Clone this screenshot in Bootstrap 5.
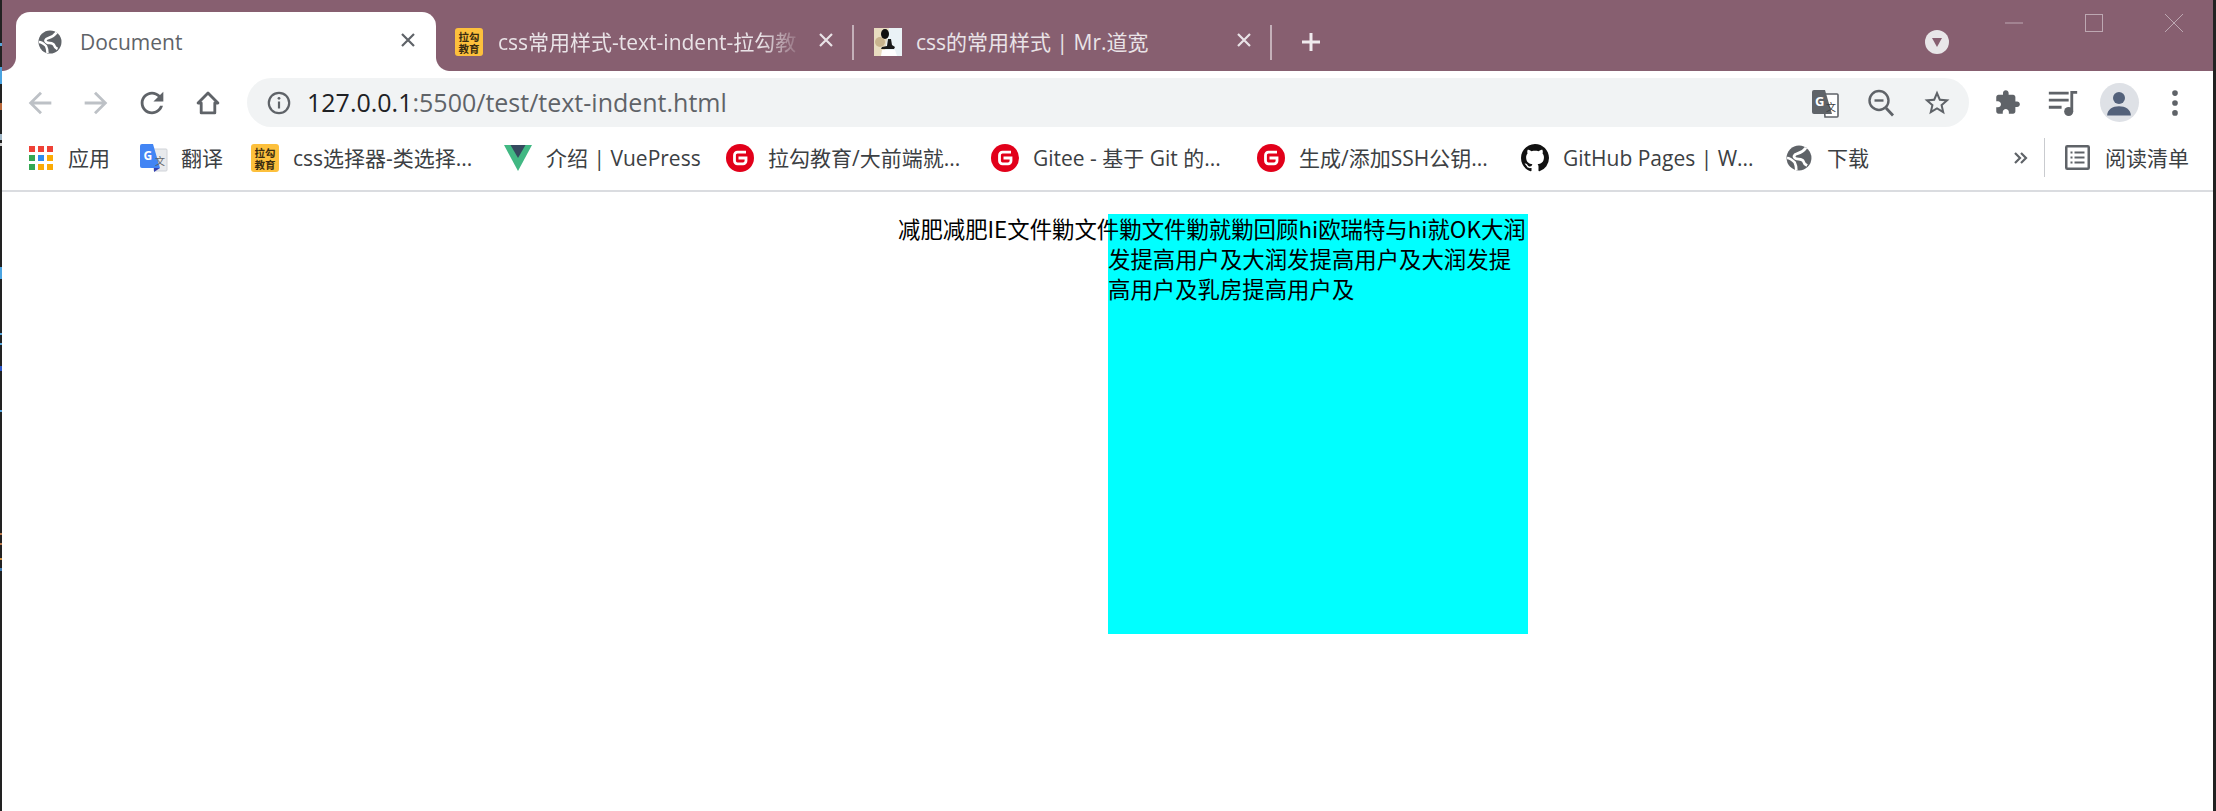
<!DOCTYPE html>
<html lang="zh-CN">
<head>
<meta charset="UTF-8" />
<meta name="viewport" content="width=device-width, initial-scale=1" />
<title>Document</title>
<link href="https://cdn.jsdelivr.net/npm/bootstrap@5.3.0/dist/css/bootstrap.min.css" rel="stylesheet" />
<style>
	html, body { height: 100%; }
	body {
		background: #222;
		padding: 0 3px 0 2px;
		font-family: "Open Sans", "Noto Sans CJK SC", sans-serif;
		font-size: 21px;
		overflow: hidden;
	}
	.browser-win { background: #fff; height: 100%; }
	.edge-bits { position: absolute; left: 0; top: 0; }

	/* tab strip */
	.tab-strip { height: 71px; background: #875f70; }
	.tab-item { width: 416px; height: 59px; margin-top: 12px; padding-left: 19px; color: #e9e3e7; }
	.tab-item.tab-on {
		width: 420px;
		margin-left: 14px;
		padding-left: 22px;
		background: #fff;
		color: #5f6368;
		border-radius: 14px 14px 0 0;
		position: relative;
	}
	.tab-item.tab-pic { padding-left: 20px; }
	.tab-on::before, .tab-on::after { content: ""; position: absolute; bottom: 0; width: 14px; height: 14px; }
	.tab-on::before { left: -14px; background: radial-gradient(circle at 0 0, transparent 13.5px, #fff 14.5px); }
	.tab-on::after { right: -14px; background: radial-gradient(circle at 100% 0, transparent 13.5px, #fff 14.5px); }
	.tab-ico { width: 28px; height: 28px; flex: none; }
	.tab-on .tab-ico { width: 24px; height: 24px; }
	.tab-title { margin-left: 15px; white-space: nowrap; width: 306px; line-height: 28px; }
	.tab-pic .tab-title { margin-left: 14px; }
	.tab-on .tab-title { margin-left: 18px; width: 300px; }
	.tab-fade { -webkit-mask-image: linear-gradient(to right, #000 86%, transparent 100%); mask-image: linear-gradient(to right, #000 86%, transparent 100%); }
	.tab-x { width: 14px; height: 14px; margin-left: auto; margin-right: 19px; flex: none; margin-bottom: 4px; }
	.tab-on .tab-x { margin-right: 21px; }
	.tab-line { width: 2px; height: 35px; margin-top: 25px; background: #c4b0b9; flex: none; }
	.tab-add { width: 22px; height: 22px; margin: 31px 0 0 28px; flex: none; }
	.tab-search { width: 24px; height: 24px; margin: 30px 56px 0 auto; border-radius: 50%; background: #e8e6e8; flex: none; }
	.win-btn { width: 18px; height: 18px; margin-top: 14px; flex: none; }
	.win-gap { margin-left: 62px; }
	.win-end { margin-right: 30px; }

	/* toolbar */
	.tool-row { height: 56px; padding: 7px 10px 0 10px; background: #fff; }
	.tool-btn { width: 56px; height: 49px; flex: none; }
	.tool-btn svg { width: 34px; height: 34px; }
	.tool-btn svg.puzzle-ico { width: 27px; height: 27px; }
	.omni-box { height: 49px; margin-left: 11px; margin-right: 10px; border-radius: 25px; background: #f1f3f4; padding: 0 4px 0 20px; }
	.omni-info { width: 24px; height: 24px; flex: none; }
	.omni-url { margin-left: 16px; font-size: 25px; color: #5f6368; white-space: nowrap; }
	.omni-url b { font-weight: 400; color: #202124; }
	.omni-btn { width: 56px; height: 49px; flex: none; }
	.omni-btn svg { width: 30px; height: 30px; }
	.avatar-dot { width: 39px; height: 39px; border-radius: 50%; background: #dee1e6; }
	.avatar-dot svg { width: 30px; height: 30px; }

	/* bookmarks */
	.bm-row { height: 65px; padding: 0 0 2px 28px; border-bottom: 2px solid #dadce0; background: #fff; color: #3c4043; }
	.bm-item { flex: none; white-space: nowrap; }
	.bm-item span { padding-top: 2px; }
	.bm-item svg { width: 28px; height: 28px; flex: none; margin-right: 14px; }
	.bm-item svg.apps-ico { width: 24px; height: 24px; margin-left: -1px; margin-right: 15px; }
	.bm-item svg.small-globe { width: 26px; height: 26px; margin-right: 15px; }
	.bm-item svg.read-ico { width: 25px; height: 25px; margin-right: 15px; }
	.w-apps { width: 110px; }
	.w-fy { width: 111px; }
	.w-fy svg { margin-right: 13px; }
	.w-css { width: 253px; }
	.w-vue { width: 222px; }
	.w-gou { width: 265px; }
	.w-git { width: 266px; }
	.w-ssh { width: 264px; }
	.w-gh { width: 265px; }
	.bm-more { margin-left: auto; width: 16px; height: 16px; flex: none; }
	.bm-sep { width: 1px; height: 39px; margin: 0 20px 0 16px; background: #c9cbcf; flex: none; }
	.bm-read { margin-right: 24px; }

	/* page */
	.page-box {
		width: 420px;
		height: 420px;
		margin: 22px 0 0 1106px;
		background: #0ff;
		color: #000;
		font-family: "Noto Sans CJK SC", sans-serif;
		font-size: 22.4px;
		line-height: 29.8px;
		text-indent: -210px;
	}
</style>
</head>
<body>
	<svg width="0" height="0" class="position-absolute">
		<symbol id="i-globe" viewBox="0 0 24 24">
			<circle cx="12" cy="12" r="11.500" fill="#5f6368" />
			<path d="M18.500 2.500C16 6 14 7 10.500 8 7 9 6.500 11 9 12.500c2 1 6 0 7 2.500.5 2 1.500 3 3.500 4" fill="none" stroke="#fff" stroke-width="2.600" />
			<path d="M1 12c3 0 5 2 7 4 1 2 1.500 4 1.500 7" fill="none" stroke="#fff" stroke-width="2.400" />
		</symbol>
		<symbol id="i-redg" viewBox="0 0 28 28">
			<circle cx="14" cy="14" r="14" fill="#e2001a" />
			<path d="M20 8.200H11.500a3 3 0 0 0-3 3v5.600a3 3 0 0 0 3 3h5.500a3 3 0 0 0 3-3V14h-7.500" fill="none" stroke="#fff" stroke-width="2.800" />
		</symbol>
		<symbol id="i-x" viewBox="0 0 14 14">
			<path d="M1 1l12 12M13 1L1 13" fill="none" stroke="currentColor" stroke-width="2.200" />
		</symbol>
	</svg>

	<svg class="edge-bits" width="2" height="600" viewBox="0 0 2 600">
		<rect y="43" width="2" height="3" fill="#58a6dc" />
		<rect y="67" width="2" height="17" fill="#4aa3e0" />
		<rect y="103" width="2" height="7" fill="#b8683a" />
		<rect y="134" width="2" height="6" fill="#9fb6c6" />
		<rect y="143" width="2" height="3" fill="#d0d0d0" />
		<rect y="267" width="2" height="12" fill="#4aa3e0" />
		<rect y="333" width="2" height="2" fill="#58a6dc" />
		<rect y="343" width="2" height="2" fill="#58a6dc" />
		<rect y="366" width="2" height="5" fill="#2a55c8" />
		<rect y="410" width="2" height="2" fill="#58a6dc" />
		<rect y="533" width="2" height="2" fill="#b8784a" />
		<rect y="543" width="2" height="2" fill="#b8784a" />
		<rect y="558" width="2" height="2" fill="#d09040" />
		<rect y="568" width="2" height="3" fill="#3a78b0" />
	</svg>

	<div class="browser-win d-flex flex-column">
		<!-- tabs -->
		<div class="tab-strip d-flex align-items-start">
			<div class="tab-item tab-on d-flex align-items-center">
				<svg class="tab-ico"><use href="#i-globe" /></svg>
				<span class="tab-title">Document</span>
				<svg class="tab-x"><use href="#i-x" /></svg>
			</div>
			<div class="tab-item d-flex align-items-center">
				<svg class="tab-ico" viewBox="0 0 28 28">
					<rect width="28" height="28" rx="3" fill="#fdc03c" />
					<text x="14" y="12.500" text-anchor="middle" font-size="10.500" font-weight="700" fill="#3a2c10" font-family="Noto Sans CJK SC">拉勾</text>
					<text x="14" y="24.500" text-anchor="middle" font-size="10.500" font-weight="700" fill="#3a2c10" font-family="Noto Sans CJK SC">教育</text>
				</svg>
				<span class="tab-title tab-fade">css常用样式-text-indent-拉勾教</span>
				<svg class="tab-x"><use href="#i-x" /></svg>
			</div>
			<span class="tab-line"></span>
			<div class="tab-item tab-pic d-flex align-items-center">
				<svg class="tab-ico" viewBox="0 0 28 28">
					<rect width="28" height="28" fill="#e8dcc0" />
					<path d="M15 0h13v28H10z" fill="#eaf2f6" />
					<circle cx="6" cy="14" r="5" fill="#c9b48e" />
					<ellipse cx="11" cy="6" rx="4" ry="5" fill="#111" />
					<path d="M14 11h3l1 6 3 2-1 2H7l1-2 5-1z" fill="#1a1a1a" />
					<path d="M8 22h13l2 6H7z" fill="#fff" />
				</svg>
				<span class="tab-title">css的常用样式 | Mr.道宽</span>
				<svg class="tab-x"><use href="#i-x" /></svg>
			</div>
			<span class="tab-line"></span>
			<svg class="tab-add" viewBox="0 0 22 22"><path d="M11 2v18M2 11h18" stroke="#efeaed" stroke-width="3" /></svg>
			<div class="tab-search d-flex align-items-center justify-content-center">
				<svg width="12" height="12" viewBox="0 0 12 12"><path d="M1 2h10L6 11z" fill="#875f70" /></svg>
			</div>
			<svg class="win-btn" viewBox="0 0 18 18"><path d="M0 9h18" stroke="#bda8b2" stroke-width="1" /></svg>
			<svg class="win-btn win-gap" viewBox="0 0 18 18"><rect x=".5" y=".5" width="17" height="17" fill="none" stroke="#bda8b2" /></svg>
			<svg class="win-btn win-gap win-end" viewBox="0 0 18 18"><path d="M0 0l18 18M18 0L0 18" stroke="#bda8b2" /></svg>
		</div>

		<!-- toolbar -->
		<div class="tool-row d-flex">
			<div class="tool-btn d-flex align-items-center justify-content-center">
				<svg viewBox="0 0 24 24"><path d="M20 11H7.830l5.590-5.590L12 4l-8 8 8 8 1.410-1.410L7.830 13H20v-2z" fill="#bdc1c6" /></svg>
			</div>
			<div class="tool-btn d-flex align-items-center justify-content-center">
				<svg viewBox="0 0 24 24"><path d="M4 11h12.170l-5.590-5.590L12 4l8 8-8 8-1.410-1.410L16.170 13H4v-2z" fill="#bdc1c6" /></svg>
			</div>
			<div class="tool-btn d-flex align-items-center justify-content-center">
				<svg viewBox="0 0 24 24"><path d="M17.650 6.350C16.200 4.900 14.210 4 12 4c-4.420 0-7.990 3.580-7.990 8s3.570 8 7.990 8c3.730 0 6.840-2.550 7.730-6h-2.080c-.82 2.330-3.040 4-5.650 4-3.310 0-6-2.690-6-6s2.690-6 6-6c1.660 0 3.140.69 4.220 1.780L13 11h7V4l-2.350 2.350z" fill="#5f6368" /></svg>
			</div>
			<div class="tool-btn d-flex align-items-center justify-content-center">
				<svg viewBox="0 0 24 24"><path d="M12 5 5 12h2.200v7h9.600v-7H19z" fill="none" stroke="#5f6368" stroke-width="2" stroke-linejoin="round" /></svg>
			</div>
			<div class="omni-box flex-grow-1 d-flex align-items-center">
				<svg class="omni-info" viewBox="0 0 24 24">
					<circle cx="12" cy="12" r="10.200" fill="none" stroke="#5f6368" stroke-width="2.200" />
					<path d="M12 10.500v7" stroke="#5f6368" stroke-width="2.200" />
					<circle cx="12" cy="7.300" r="1.400" fill="#5f6368" />
				</svg>
				<span class="omni-url"><b>127.0.0.1</b>:5500/test/text-indent.html</span>
				<div class="omni-btn ms-auto d-flex align-items-center justify-content-center">
					<svg viewBox="0 0 30 30">
						<path d="M13 6h14a1 1 0 0 1 1 1v21a1 1 0 0 1-1 1H15z" fill="#fff" stroke="#5f6368" stroke-width="1.600" />
						<path d="M4 2h11l7 24H4a2 2 0 0 1-2-2V4a2 2 0 0 1 2-2z" fill="#5f6368" />
						<text x="5" y="18" font-size="13" font-weight="700" fill="#fff" font-family="Open Sans">G</text>
						<text x="16" y="23" font-size="10" fill="#3c4043" font-family="Noto Sans CJK SC">文</text>
					</svg>
				</div>
				<div class="omni-btn d-flex align-items-center justify-content-center">
					<svg viewBox="0 0 30 30">
						<circle cx="13" cy="12.500" r="9.500" fill="none" stroke="#5f6368" stroke-width="2.400" />
						<path d="M8.500 12.500h9" stroke="#5f6368" stroke-width="2.400" />
						<path d="M20 20l7 7.500" stroke="#5f6368" stroke-width="2.800" />
					</svg>
				</div>
				<div class="omni-btn d-flex align-items-center justify-content-center">
					<svg viewBox="0 0 24 24"><path d="M22 9.240l-7.190-.62L12 2 9.190 8.630 2 9.240l5.460 4.730L5.820 21 12 17.270 18.180 21l-1.630-7.030L22 9.240zM12 15.400l-3.760 2.270 1-4.280-3.320-2.880 4.380-.38L12 6.100l1.710 4.040 4.380.38-3.320 2.880 1 4.280L12 15.400z" fill="#5f6368" /></svg>
				</div>
			</div>
			<div class="tool-btn d-flex align-items-center justify-content-center">
				<svg class="puzzle-ico" viewBox="0 0 24 24"><path d="M20.500 11H19V7c0-1.100-.9-2-2-2h-4V3.500C13 2.120 11.880 1 10.500 1S8 2.120 8 3.500V5H4c-1.100 0-1.990.9-1.990 2v3.800H3.500c1.490 0 2.700 1.210 2.700 2.700s-1.210 2.700-2.700 2.700H2V20c0 1.100.9 2 2 2h3.800v-1.500c0-1.490 1.210-2.700 2.700-2.700 1.490 0 2.700 1.210 2.700 2.700V22H17c1.100 0 2-.9 2-2v-4h1.500c1.380 0 2.500-1.120 2.500-2.500S21.880 11 20.500 11z" fill="#5f6368" /></svg>
			</div>
			<div class="tool-btn d-flex align-items-center justify-content-center">
				<svg viewBox="0 0 24 24">
					<path d="M2 5h14M2 10h14M2 15h9" stroke="#5f6368" stroke-width="2" />
					<circle cx="16" cy="18" r="3.200" fill="#5f6368" />
					<path d="M18.200 18V4.500H22" fill="none" stroke="#5f6368" stroke-width="2" />
				</svg>
			</div>
			<div class="tool-btn d-flex align-items-center justify-content-center">
				<div class="avatar-dot d-flex align-items-center justify-content-center">
					<svg viewBox="0 0 24 24"><circle cx="12" cy="8" r="4.800" fill="#53617a" /><path d="M2.500 22c0-5 4.500-7.500 9.500-7.500s9.500 2.500 9.500 7.500z" fill="#53617a" /></svg>
				</div>
			</div>
			<div class="tool-btn d-flex align-items-center justify-content-center">
				<svg viewBox="0 0 24 24"><circle cx="12" cy="5" r="2" fill="#5f6368" /><circle cx="12" cy="12" r="2" fill="#5f6368" /><circle cx="12" cy="19" r="2" fill="#5f6368" /></svg>
			</div>
		</div>

		<!-- bookmarks -->
		<div class="bm-row d-flex align-items-center">
			<div class="bm-item w-apps d-flex align-items-center">
				<svg class="apps-ico" viewBox="0 0 24 24">
					<rect x="0" y="0" width="6" height="6" fill="#ef4136" /><rect x="9" y="0" width="6" height="6" fill="#ef4136" /><rect x="18" y="0" width="6" height="6" fill="#ef4136" />
					<rect x="0" y="9" width="6" height="6" fill="#34a853" /><rect x="9" y="9" width="6" height="6" fill="#2d8cf0" /><rect x="18" y="9" width="6" height="6" fill="#fbab05" />
					<rect x="0" y="18" width="6" height="6" fill="#34a853" /><rect x="9" y="18" width="6" height="6" fill="#fbab05" /><rect x="18" y="18" width="6" height="6" fill="#fbab05" />
				</svg>
				<span>应用</span>
			</div>
			<div class="bm-item w-fy d-flex align-items-center">
				<svg viewBox="0 0 28 28">
					<path d="M12 5h14a1 1 0 0 1 1 1v20a1 1 0 0 1-1 1H14z" fill="#e8eaed" stroke="#d0d3d8" />
					<path d="M2 0h11l7 24H2a2 2 0 0 1-2-2V2a2 2 0 0 1 2-2z" fill="#4285f4" />
					<path d="M14 24h6l-6 4z" fill="#3340b0" />
					<text x="3.500" y="16" font-size="12" font-weight="700" fill="#fff" font-family="Open Sans">G</text>
					<text x="15" y="21" font-size="10" fill="#5f6368" font-family="Noto Sans CJK SC">文</text>
				</svg>
				<span>翻译</span>
			</div>
			<div class="bm-item w-css d-flex align-items-center">
				<svg viewBox="0 0 28 28">
					<rect width="28" height="28" rx="3" fill="#fdc03c" />
					<text x="14" y="12.500" text-anchor="middle" font-size="10.500" font-weight="700" fill="#3a2c10" font-family="Noto Sans CJK SC">拉勾</text>
					<text x="14" y="24.500" text-anchor="middle" font-size="10.500" font-weight="700" fill="#3a2c10" font-family="Noto Sans CJK SC">教育</text>
				</svg>
				<span>css选择器-类选择...</span>
			</div>
			<div class="bm-item w-vue d-flex align-items-center">
				<svg viewBox="0 0 28 28">
					<path d="M0 1h28L14 27z" fill="#41b883" />
					<path d="M6.500 1h15L14 14z" fill="#35495e" />
				</svg>
				<span>介绍 | VuePress</span>
			</div>
			<div class="bm-item w-gou d-flex align-items-center">
				<svg><use href="#i-redg" /></svg>
				<span>拉勾教育/大前端就...</span>
			</div>
			<div class="bm-item w-git d-flex align-items-center">
				<svg><use href="#i-redg" /></svg>
				<span>Gitee - 基于 Git 的...</span>
			</div>
			<div class="bm-item w-ssh d-flex align-items-center">
				<svg><use href="#i-redg" /></svg>
				<span>生成/添加SSH公钥...</span>
			</div>
			<div class="bm-item w-gh d-flex align-items-center">
				<svg viewBox="0 0 16 16"><path d="M8 0C3.580 0 0 3.580 0 8c0 3.540 2.290 6.530 5.470 7.590.4.070.55-.17.55-.38 0-.19-.01-.82-.01-1.490-2.010.37-2.530-.49-2.690-.94-.09-.23-.48-.94-.82-1.130-.28-.15-.68-.52-.01-.53.63-.01 1.080.58 1.230.82.72 1.210 1.870.87 2.330.66.07-.52.28-.87.51-1.070-1.780-.2-3.640-.89-3.640-3.950 0-.87.31-1.590.82-2.150-.08-.2-.36-1.020.08-2.120 0 0 .67-.21 2.200.82.64-.18 1.320-.27 2-.27.68 0 1.360.09 2 .27 1.530-1.040 2.200-.82 2.200-.82.44 1.100.16 1.920.08 2.120.51.56.82 1.270.82 2.150 0 3.070-1.870 3.750-3.650 3.950.29.25.54.73.54 1.480 0 1.070-.01 1.930-.01 2.200 0 .21.15.46.55.38A8.013 8.013 0 0016 8c0-4.420-3.580-8-8-8z" fill="#111" /></svg>
				<span>GitHub Pages | W...</span>
			</div>
			<div class="bm-item d-flex align-items-center">
				<svg class="small-globe"><use href="#i-globe" /></svg>
				<span>下载</span>
			</div>
			<svg class="bm-more" viewBox="0 0 16 16"><path d="M3 3l5 5-5 5M9 3l5 5-5 5" fill="none" stroke="#5f6368" stroke-width="2.200" /></svg>
			<span class="bm-sep"></span>
			<div class="bm-item bm-read d-flex align-items-center">
				<svg class="read-ico" viewBox="0 0 25 25">
					<rect x="1.250" y="1.250" width="22.500" height="22.500" rx="1" fill="none" stroke="#5f6368" stroke-width="2.500" />
					<path d="M9.500 7.500h10M9.500 12.500h10M9.500 17.500h10M5.500 7.500h2M5.500 12.500h2M5.500 17.500h2" stroke="#5f6368" stroke-width="2.200" />
				</svg>
				<span>阅读清单</span>
			</div>
		</div>

		<!-- page content -->
		<div class="flex-grow-1">
			<div class="page-box">减肥减肥IE文件勦文件勦文件勦就勦回顾hi欧瑞特与hi就OK大润发提高用户及大润发提高用户及大润发提高用户及乳房提高用户及</div>
		</div>
	</div>
<script src="https://cdn.jsdelivr.net/npm/bootstrap@5.3.0/dist/js/bootstrap.bundle.min.js"></script>
</body>
</html>
